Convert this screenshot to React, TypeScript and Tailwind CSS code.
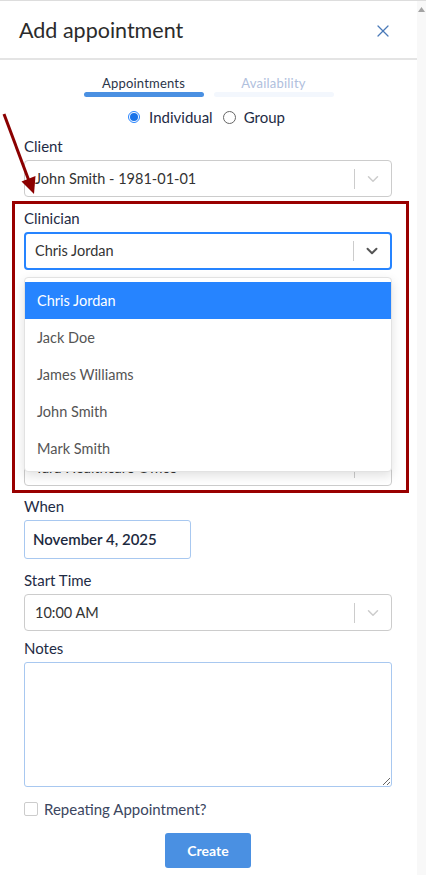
import { ChevronDown, X } from 'lucide-react'

const font = { fontFamily: 'Lato, "Noto Sans", sans-serif' }

const clinicians = ['Chris Jordan', 'Jack Doe', 'James Williams', 'John Smith', 'Mark Smith']

function Label({ children, className = '' }: { children: string; className?: string }) {
  return <div className={`h-[18px] text-[15px] leading-[18px] text-[#1e2b45] mb-[5px] ${className}`}>{children}</div>
}

function Select({ value, focused = false, hidden = false }: { value: string; focused?: boolean; hidden?: boolean }) {
  return (
    <div
      className={`flex items-center rounded-[4px] bg-white ${
        focused ? 'h-[38px] border-2 border-[#2684ff] pl-[9px]' : 'h-[37px] border border-[#cccccc] pl-[10px]'
      }`}
    >
      <span className={`flex-1 text-[14.5px] text-[#333] ${hidden ? 'invisible' : ''}`}>{value}</span>
      <span className="w-px h-[20px] bg-[#cccccc]" />
      <span className="w-[36px] flex justify-center">
        <ChevronDown size={18} strokeWidth={focused ? 2.6 : 2} className={focused ? 'text-[#555]' : 'text-[#cccccc]'} />
      </span>
    </div>
  )
}

export default function App() {
  return (
    <div className="relative flex w-[426px] h-[875px] bg-white overflow-hidden border-t border-[#dddddd]" style={font}>
      <div className="flex-1 flex flex-col">
        {/* header */}
        <div className="h-[59px] shrink-0 flex items-center justify-between pl-[19px] pr-[24px] border-b-2 border-[#e4e4e4]">
          <h1 className="text-[21.5px] text-[#2b2b2b] mt-[1px]">Add appointment</h1>
          <X size={20} strokeWidth={1.5} className="text-[#4a7ab8] mt-[3px]" />
        </div>

        {/* tabs */}
        <div className="flex justify-center gap-[10px] pt-[15px]">
          <div className="w-[120px] flex flex-col items-center">
            <span className="text-[13px] leading-[16px] text-[#2b3548] tracking-[0.2px]">Appointments</span>
            <span className="mt-[1px] w-full h-[5px] rounded-full bg-[#4a90e2]" />
          </div>
          <div className="w-[120px] flex flex-col items-center">
            <span className="text-[13px] leading-[16px] text-[#b0c0dd] tracking-[0.2px]">Availability</span>
            <span className="mt-[1px] w-full h-[5px] rounded-full bg-[#f3f7fd]" />
          </div>
        </div>

        {/* radio */}
        <div className="flex justify-center items-center mt-[10px] h-[20px] text-[15px] text-[#1e2b45] ml-[-4px]">
          <span className="w-[12px] h-[12px] rounded-full border border-[#2684ff] flex items-center justify-center">
            <span className="w-[8px] h-[8px] rounded-full bg-[#1a73e8]" />
          </span>
          <span className="ml-[9px]">Individual</span>
          <span className="ml-[10px] w-[13px] h-[13px] rounded-full border border-[#666]" />
          <span className="ml-[8px]">Group</span>
        </div>

        <div className="pl-[24px] pr-[25px] mt-[10px]">
          <Label>Client</Label>
          <Select value="John Smith - 1981-01-01" />

          {/* highlighted clinician box */}
          <div className="relative mt-[4px] ml-[-12px] mr-[-17px] border-[3px] border-[#990000] pl-[9px] pr-[14px] pt-[5px] pb-[4px]">
            <Label>Clinician</Label>
            <Select value="Chris Jordan" focused />
            <Label className="mt-[12px] invisible">Service</Label>
            <Select value="Individual Therapy" hidden />
            <Label className="mt-[12px] invisible">Duration</Label>
            <Select value="60 minutes" hidden />
            <Label className="mt-[12px] invisible">Location</Label>
            <Select value="Tara Healthcare Office" />

            {/* open menu */}
            <div className="absolute left-[9px] right-[14px] top-[73px] bg-white rounded-[4px] border border-[#e2e2e2] shadow-[0_4px_11px_rgba(0,0,0,0.12)] py-[4px]">
              {clinicians.map((name, i) => (
                <div
                  key={name}
                  className={`h-[37px] flex items-center pl-[12px] text-[14.5px] ${
                    i === 0 ? 'bg-[#2684ff] text-white' : 'text-[#555]'
                  }`}
                >
                  {name}
                </div>
              ))}
            </div>
          </div>

          <Label className="mt-[4px]">When</Label>
          <div className="w-[167px] h-[39px] border border-[#a8c8f0] rounded-[3px] flex items-center pl-[8px] text-[15px] font-semibold text-[#1c2940]">
            November 4, 2025
          </div>

          <Label className="mt-[12px]">Start Time</Label>
          <Select value="10:00 AM" />

          <Label className="mt-[8px]">Notes</Label>
          <textarea className="block w-full h-[125px] border border-[#a8c8f0] rounded-[3px] outline-none" />

          <label className="flex items-center mt-[14px] h-[16px]">
            <span className="w-[14px] h-[14px] border border-[#cccccc] rounded-[2px]" />
            <span className="ml-[6px] text-[15px] text-[#3b4660]">Repeating Appointment?</span>
          </label>

          <div className="flex justify-center mt-[16px]">
            <button className="w-[86px] h-[35px] rounded-[3px] bg-[#4a90e2] text-white text-[14px] font-bold">Create</button>
          </div>
        </div>
      </div>

      {/* scrollbar */}
      <div className="w-[9px] bg-[#f8f8f8] flex justify-center pt-[6px]">
        <svg width="7" height="5" viewBox="0 0 7 5">
          <polygon points="3.5,0 7,5 0,5" fill="#a3a3a3" />
        </svg>
      </div>

      {/* annotation arrow */}
      <svg className="absolute left-0 top-[100px]" width="46" height="100" viewBox="0 0 46 100">
        <line x1="4" y1="13" x2="29" y2="80" stroke="#8b0000" strokeWidth="3" />
        <polygon points="34,93 21.5,80.5 35.5,75" fill="#8b0000" />
      </svg>
    </div>
  )
}
